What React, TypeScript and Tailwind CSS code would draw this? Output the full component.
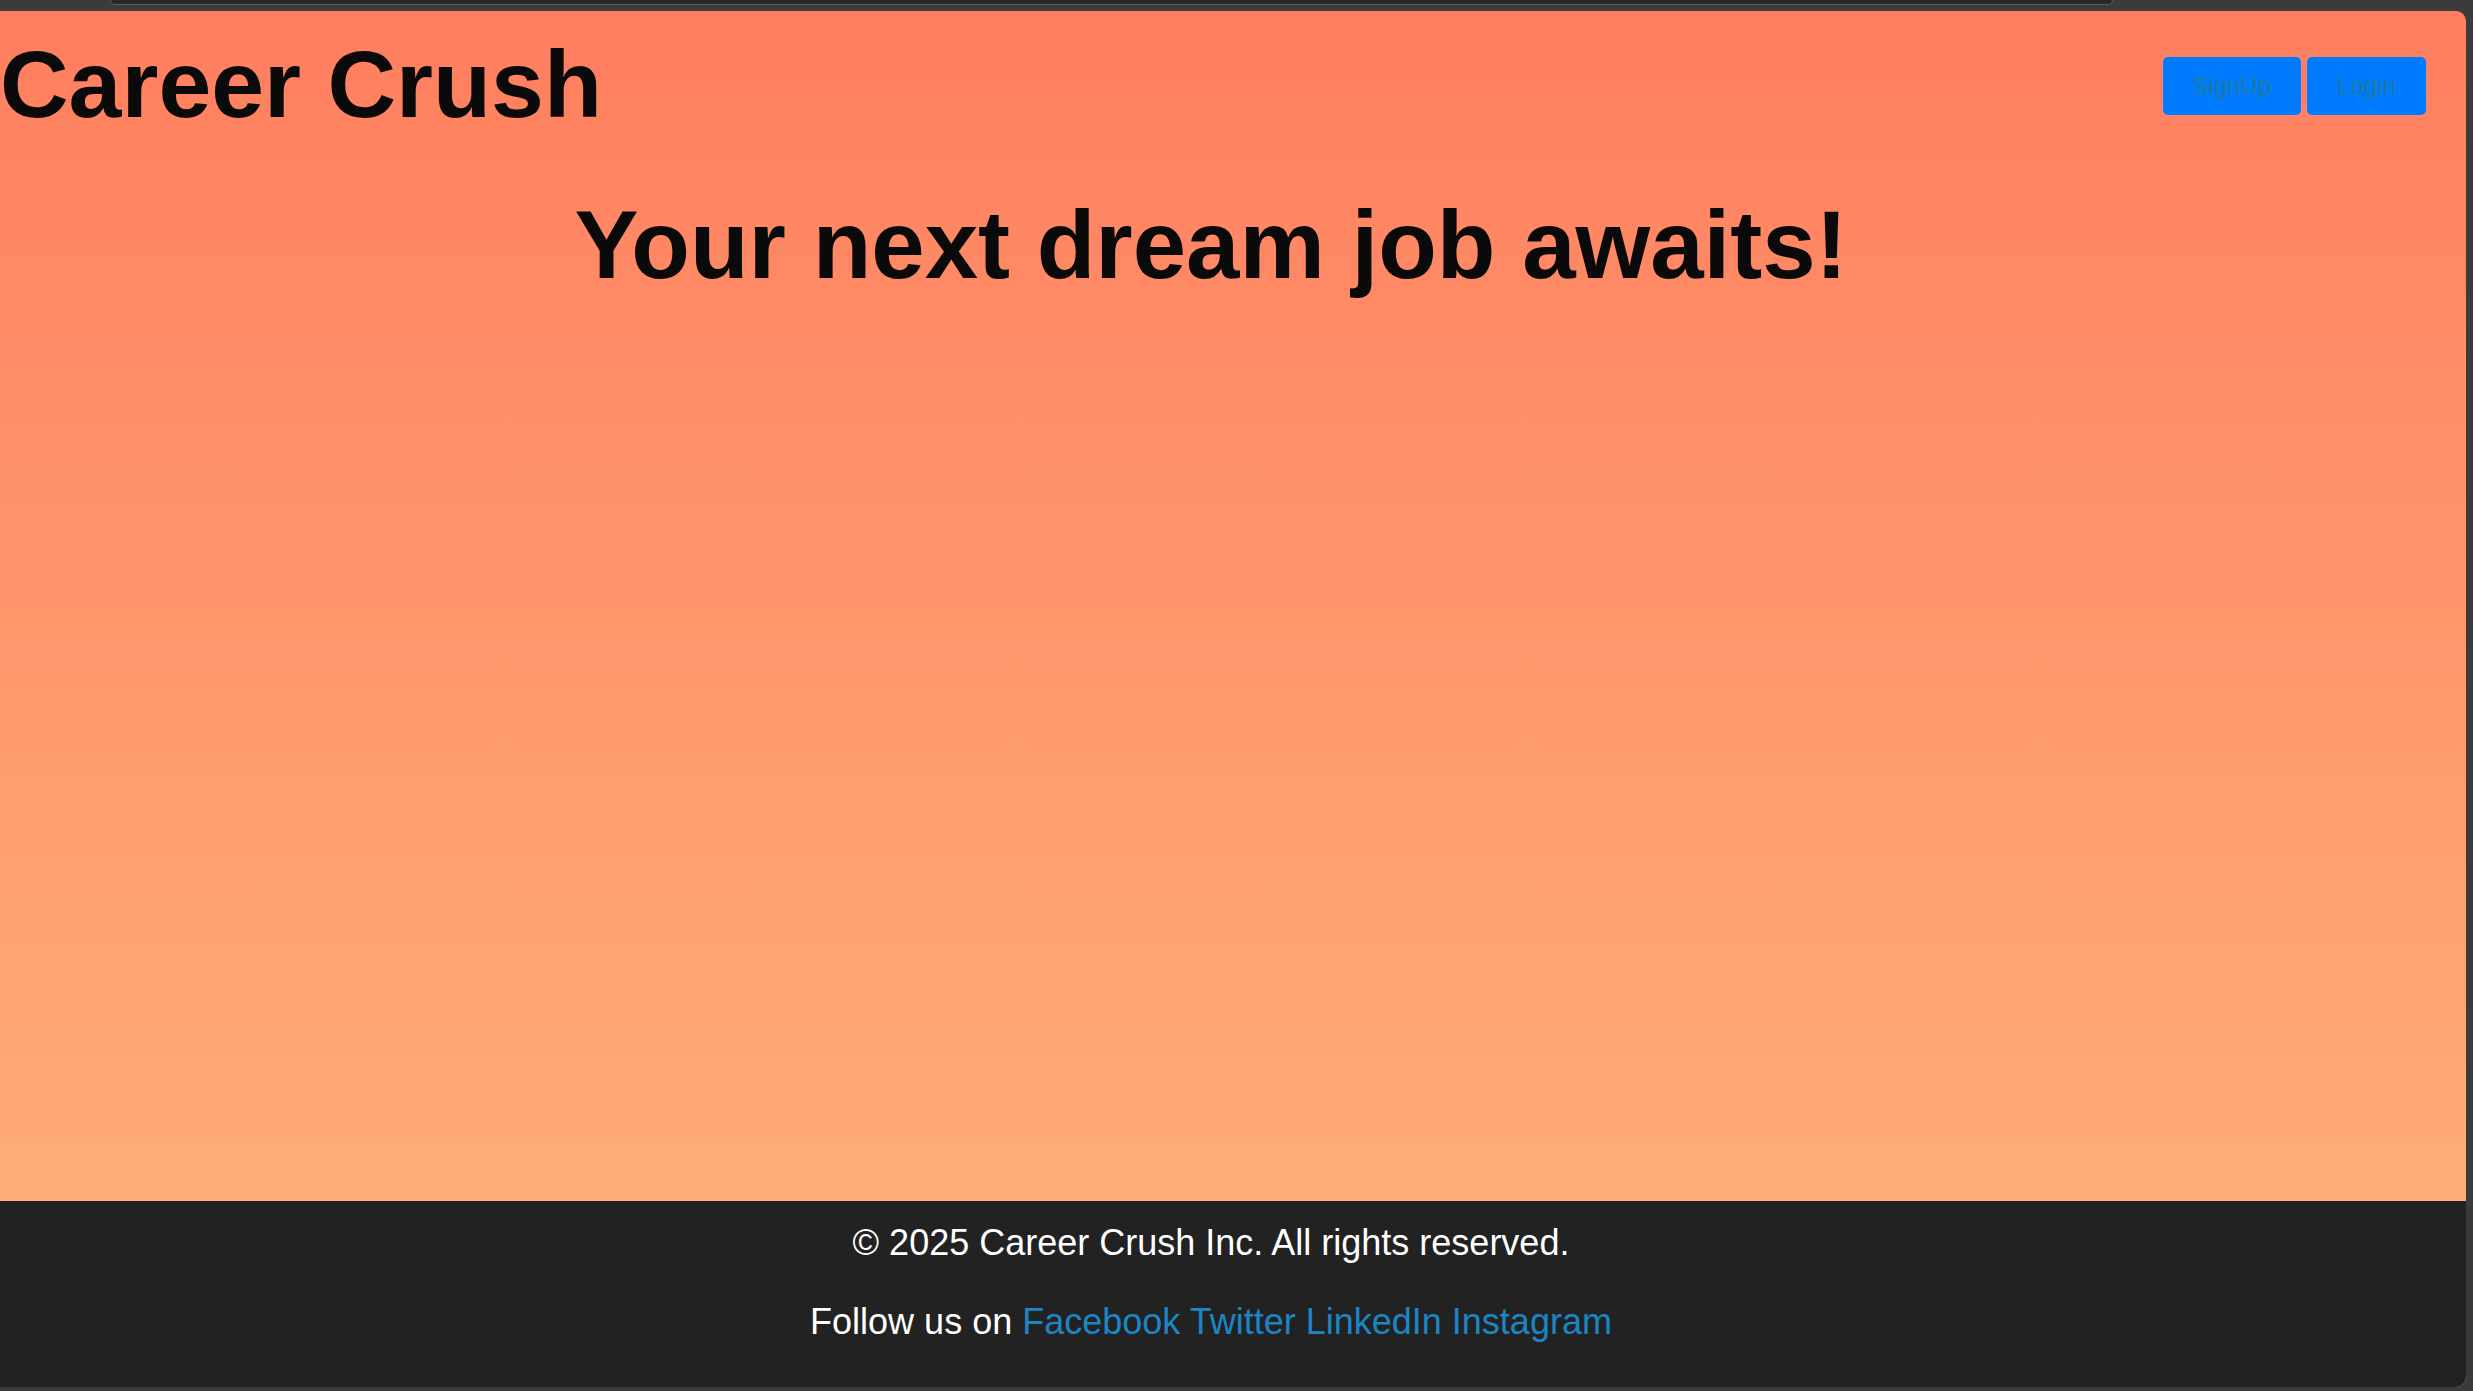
import React from "react";

const links = ["Facebook", "Twitter", "LinkedIn", "Instagram"];

const App = () => {
  return (
    <div className="w-screen h-screen bg-[#3b3b3b] flex flex-col pr-[7px] pb-[4px] font-['Liberation_Sans',Arial,sans-serif] overflow-hidden">
      {/* window chrome strip */}
      <div className="h-[11px] shrink-0 flex">
        <div className="ml-[110px] w-[2003px] h-[5px] bg-[#272727] border-b border-x border-[#5a5a5a] rounded-b-[10px]" />
      </div>

      <div className="flex-1 flex flex-col rounded-tr-[10px] rounded-br-[10px] overflow-hidden bg-gradient-to-b from-[#ff7e5f] to-[#feb47b]">
        <main className="flex-1 flex flex-col">
          <header className="flex items-center justify-between mt-[26px] pr-[40px]">
            <h1 className="text-[95px] leading-none font-bold text-[#0a0a0a]">Career Crush</h1>
            <div className="flex gap-[6px] mt-[3px]">
              <button className="h-[58px] px-[30px] rounded-[5px] bg-[#007bff] text-[#1f7a99] text-[24px]">
                SignUp
              </button>
              <button className="h-[58px] px-[30px] rounded-[5px] bg-[#007bff] text-[#1f7a99] text-[24px]">
                Login
              </button>
            </div>
          </header>

          <h2 className="mt-[65px] text-center pr-[44px] text-[96px] leading-none font-bold text-[#0a0a0a]">
            Your next dream job awaits!
          </h2>
        </main>

        <footer className="h-[186px] shrink-0 bg-[#222222] text-white text-[36px] leading-none flex flex-col items-center pt-[24px] gap-[43px] pr-[44px]">
          <p>© 2025 Career Crush Inc. All rights reserved.</p>
          <p>
            Follow us on{" "}
            {links.map((l, i) => (
              <span key={l}>
                <a href="#" className="text-[#1c86c4]">
                  {l}
                </a>
                {i < links.length - 1 ? " " : ""}
              </span>
            ))}
          </p>
        </footer>
      </div>
    </div>
  );
};

export default App;
